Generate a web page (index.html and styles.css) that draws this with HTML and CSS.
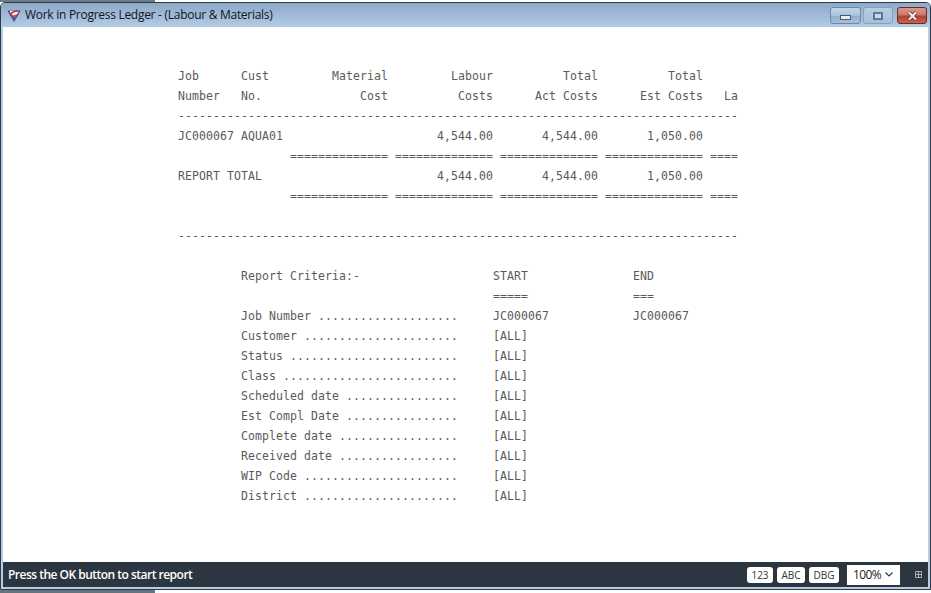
FILE: index.html
```html
<!DOCTYPE html>
<html lang="en">
<head>
<meta charset="utf-8">
<title>Work in Progress Ledger - (Labour &amp; Materials)</title>
<link rel="stylesheet" href="styles.css">
</head>
<body>
<div class="desk-top"><div class="desk-top-fill"></div></div>
<div class="window">
  <header class="titlebar">
    <svg class="app-icon" width="14" height="14" viewBox="0 0 15 14">
      <path d="M0.5 1H14.5L7.5 13.5Z" fill="#24498f"/>
      <path d="M2.5 1.5H13L7.5 11Z" fill="#e9eef6"/>
      <path d="M7.5 8L10.5 7.5L7.5 12.5L5.5 9Z" fill="#2f62b4"/>
      <path d="M12.5 1.8C8 1.5 3.5 3.5 4.5 6C5.3 7.5 8.5 7.2 11 6" fill="none" stroke="#d8202a" stroke-width="1.6"/>
    </svg>
    <span class="title">Work in Progress Ledger - (Labour &amp; Materials)</span>
    <div class="win-buttons">
      <button class="win-btn win-btn-min"><span class="glyph-min"></span></button>
      <button class="win-btn win-btn-max"><span class="glyph-max"></span></button>
      <button class="win-btn win-btn-close">
        <svg width="13" height="10" viewBox="0 0 13 10"><path d="M3 1.5L10 8.5M10 1.5L3 8.5" stroke="#4a2a28" stroke-width="3.6"/><path d="M3 1.5L10 8.5M10 1.5L3 8.5" stroke="#f4eeee" stroke-width="2.2"/></svg>
      </button>
    </div>
  </header>
  <main class="content">
<pre class="report">Job      Cust         Material         Labour          Total          Total
Number   No.              Cost          Costs      Act Costs      Est Costs   La
--------------------------------------------------------------------------------
JC000067 AQUA01                      4,544.00       4,544.00       1,050.00
                ============== ============== ============== ============== ====
REPORT TOTAL                         4,544.00       4,544.00       1,050.00
                ============== ============== ============== ============== ====

--------------------------------------------------------------------------------

         Report Criteria:-                   START               END
                                             =====               ===
         Job Number ....................     JC000067            JC000067
         Customer ......................     [ALL]
         Status ........................     [ALL]
         Class .........................     [ALL]
         Scheduled date ................     [ALL]
         Est Compl Date ................     [ALL]
         Complete date .................     [ALL]
         Received date .................     [ALL]
         WIP Code ......................     [ALL]
         District ......................     [ALL]</pre>
  </main>
  <footer class="statusbar">
    <span class="status-text">Press the OK button to start report</span>
    <div class="status-tools">
      <span class="chip chip-123">123</span>
      <span class="chip chip-abc">ABC</span>
      <span class="chip chip-dbg">DBG</span>
      <span class="zoom-select">100%
        <svg width="8" height="5" viewBox="0 0 8 5"><path d="M0.5 0.5L4 4L7.5 0.5" fill="none" stroke="#333" stroke-width="1.1"/></svg>
      </span>
      <svg class="grid-icon" width="7" height="7" viewBox="0 0 7 7"><path d="M0.5 0.5H6.5V6.5H0.5ZM0.5 3.5H6.5M3.5 0.5V6.5" fill="none" stroke="#a9aeb2" stroke-width="1"/></svg>
    </div>
  </footer>
</div>
<div class="desk-bottom"><div class="desk-bottom-fill"></div></div>
</body>
</html>
```
FILE: styles.css
```css
* { box-sizing: border-box; }
html, body { margin: 0; padding: 0; }
body {
  width: 931px;
  height: 593px;
  overflow: hidden;
  background: #fff;
  display: flex;
  flex-direction: column;
}
.desk-top { height: 2px; background: #fff; flex: none; }
.desk-top-fill { width: 155px; height: 2px; background: #6d7a85; }
.desk-bottom { height: 3px; background: #fff; flex: none; }
.desk-bottom-fill { width: 155px; height: 3px; background: #66747c; }
.window {
  flex: 1;
  display: flex;
  flex-direction: column;
  border: 1px solid #2b3a44;
  border-radius: 5px 5px 0 0;
  background: #b5cde6;
  padding: 0 2px 2px 2px;
  min-height: 0;
}
.titlebar {
  height: 24px;
  flex: none;
  display: flex;
  align-items: center;
  margin: 0 -2px;
  padding: 0 2px 0 6px;
  border-radius: 4px 4px 0 0;
  background: linear-gradient(#8da9c9, #b3cbe5);
}
.app-icon { flex: none; margin-top: 1px; }
.title {
  margin-left: 4px;
  font: 12px/16px "Open Sans", sans-serif;
  color: #10141c;
  white-space: nowrap;
  letter-spacing: -0.28px;
}
.win-buttons { margin-left: auto; display: flex; margin-right: 1px; margin-top: 1px; }
.win-btn {
  width: 30px;
  height: 17px;
  padding: 0;
  border: 1px solid #6d87a5;
  border-radius: 3px;
  background: linear-gradient(#c3d5e8 0, #a9c3de 50%, #8fadcd 51%, #a6c1dc 100%);
  display: flex;
  align-items: center;
  justify-content: center;
}
.win-btn-min { width: 31px; margin-right: 2px; }
.win-btn-max { background: linear-gradient(#b8cde3, #a5c0dc); border-color: #87a2c0; margin-right: 4px; }
.win-btn-close {
  border-color: #6b2a2c;
  background: linear-gradient(#dc9888 0, #cf7a68 45%, #b7402f 55%, #c5624f 100%);
}
.glyph-min {
  width: 11px;
  height: 5px;
  margin-top: 4px;
  background: #e6edf3;
  border: 1px solid #4c5c6f;
}
.glyph-max {
  width: 10px;
  height: 8px;
  border: 2px solid #66778c;
  background: #c6d7e8;
}
.content {
  flex: 1;
  background: #fff;
  min-height: 0;
  overflow: hidden;
  padding: 39px 0 0 175px;
}
.report {
  margin: 0;
  font-family: "DejaVu Sans Mono", monospace;
  font-size: 11.5px;
  letter-spacing: 0.077px;
  line-height: 20px;
  color: #5a5a5a;
}
.statusbar {
  height: 25px;
  flex: none;
  background: #2c3640;
  display: flex;
  align-items: center;
  padding: 0 6px 0 5px;
}
.status-text {
  font: 600 12px/16px "Open Sans", sans-serif;
  color: #fff;
  letter-spacing: -0.51px;
  white-space: nowrap;
}
.status-tools { margin-left: auto; display: flex; align-items: center; }
.chip {
  height: 16px;
  background: #fff;
  border-radius: 3px;
  display: flex;
  align-items: center;
  justify-content: center;
  font: 10px/14px "Open Sans", sans-serif;
  color: #333;
}
.chip-123 { width: 26px; margin-right: 4px; }
.chip-abc { width: 28px; margin-right: 4px; }
.chip-dbg { width: 30px; margin-right: 8px; }
.zoom-select {
  width: 53px;
  height: 20px;
  background: #fff;
  display: flex;
  align-items: center;
  justify-content: space-between;
  padding: 0 7px 0 6px;
  font: 12px/16px "Open Sans", sans-serif;
  letter-spacing: -0.6px;
  color: #222;
  margin-right: 15px;
}
.grid-icon { flex: none; }
```
